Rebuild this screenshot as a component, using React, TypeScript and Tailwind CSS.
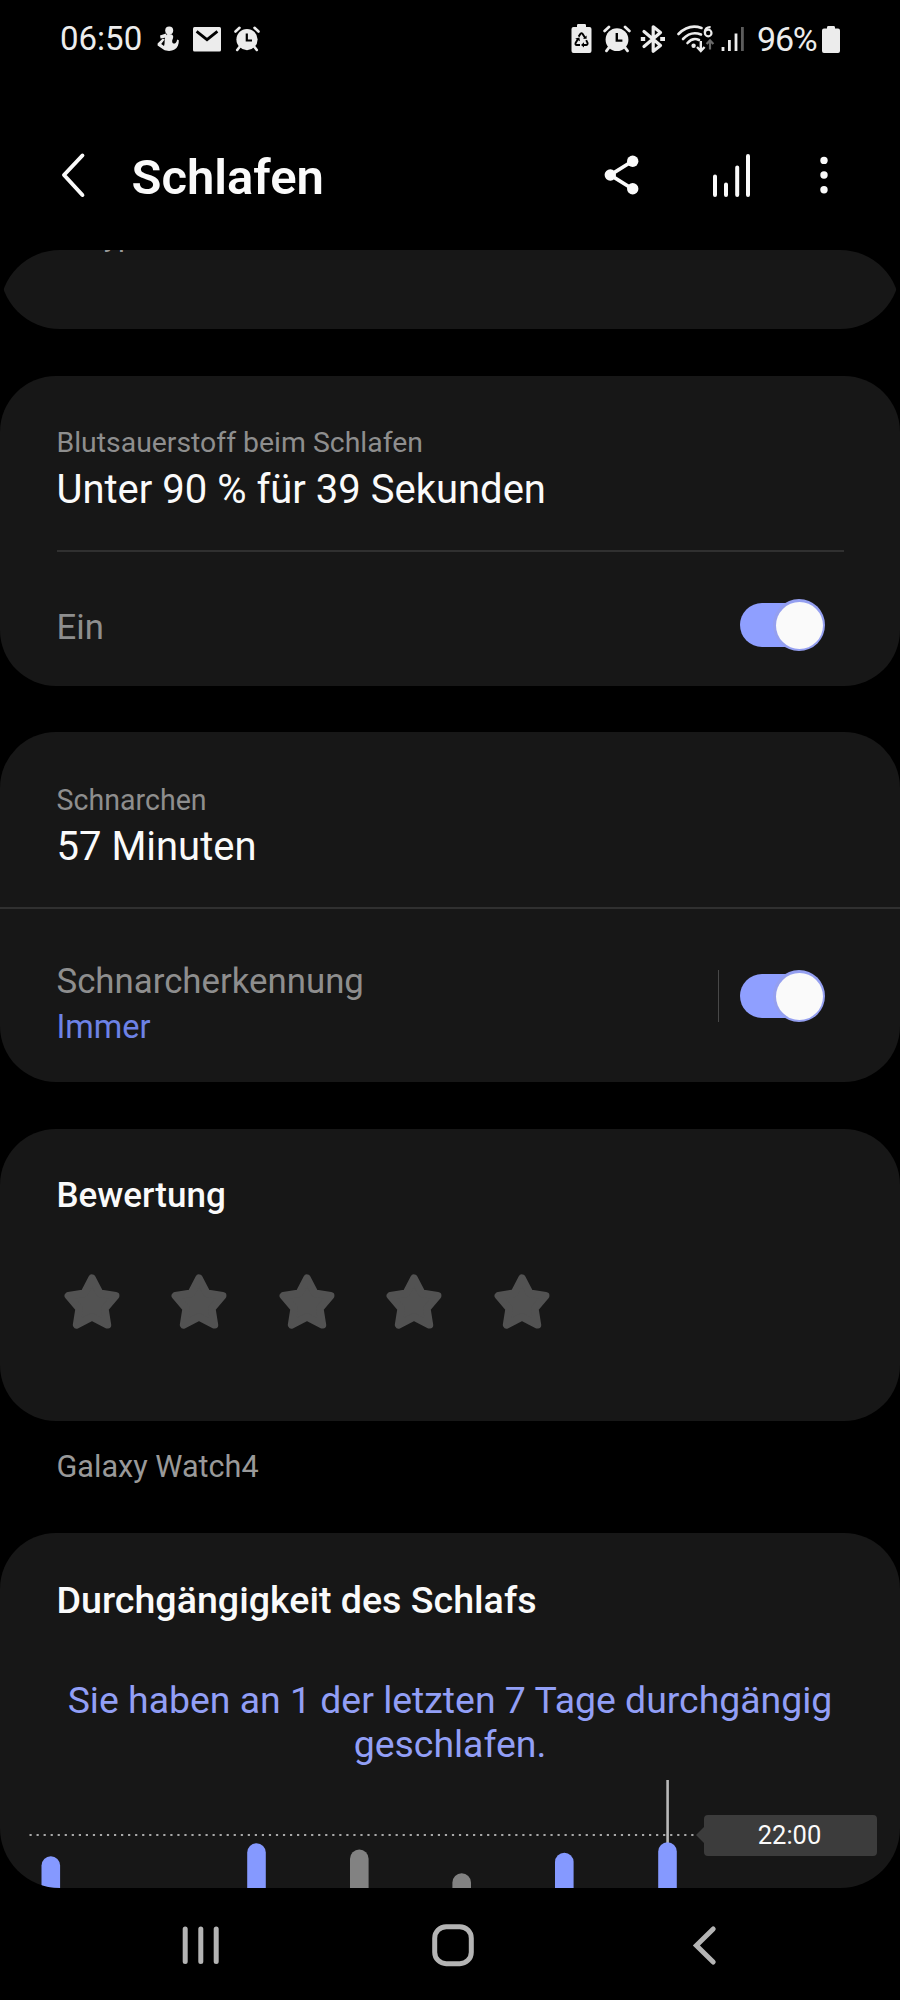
import type { ReactNode } from "react";

interface Bar {
  x: number;
  top: number;
  color: string;
}

const BARS: Bar[] = [
  { x: 41.5, top: 90.3, color: "#8599ff" },
  { x: 247.2, top: 77.3, color: "#8599ff" },
  { x: 350, top: 83.5, color: "#828282" },
  { x: 452.4, top: 107.3, color: "#828282" },
  { x: 555, top: 86.8, color: "#8599ff" },
  { x: 658.2, top: 76.3, color: "#8599ff" },
];

function AlarmIcon({ className }: { className: string }) {
  return (
    <svg viewBox="0 0 26 26" className={className} fill="none" stroke="#ececec" strokeLinecap="round">
      <circle cx="13" cy="13.6" r="10.6" fill="#ececec" stroke="none" />
      <path d="M1.5 5.5L5.5 1.8M24.5 5.5L20.5 1.8" strokeWidth="2.6" />
      <path d="M5.5 21L3.2 24M20.5 21L22.8 24" strokeWidth="2.6" />
      <path d="M12.8 7.5V14.5H18" stroke="#000" strokeWidth="2.2" strokeLinecap="butt" />
    </svg>
  );
}

function StatusBar() {
  return (
    <div className="flex h-[78px] items-center pl-[60px] pr-[60px] text-[33px] leading-[40px] text-[#ececec]">
      <span className="w-[97px]">06:50</span>
      <svg viewBox="0 0 22 26" className="h-[26px] w-[22px]" fill="#ececec">
        <circle cx="12.2" cy="4.4" r="4" />
        <path d="M9 7.6L3 9.6L3.6 12.4L9.2 11.4Z" />
        <path d="M9.5 8.5C12 7.6 15.8 8 16.2 10.5C16.4 12.8 14.8 14 15.2 16C15.7 17.6 17.4 18 18.6 17C19.6 16.1 19.8 14.5 20.2 13.4L21.8 14.2C22 18 20.6 21.8 17.5 23.6C14.5 25.4 9.5 25.4 6.5 23.5L.6 19.4V17.6L5.8 12.4L7.6 13.6L4.2 18L7 20C8.4 17 6.6 12 9.5 8.5Z" />
      </svg>
      <svg viewBox="0 0 28 25" className="ml-[14px] h-[25px] w-[28px]">
        <rect width="28" height="24.5" rx="1.5" fill="#ececec" />
        <path d="M3.6 4.4L14 12.6L24.4 4.4" fill="none" stroke="#000" strokeWidth="2.8" />
      </svg>
      <AlarmIcon className="ml-[13px] h-[26px] w-[26px]" />

      <div className="ml-auto flex items-center">
        <svg viewBox="0 0 22 30" className="h-[30px] w-[22px]">
          <path d="M6 3V1.2Q6 0 7.2 0H13.8Q15 0 15 1.2V3H18.5Q20.5 3 20.5 5V27Q20.5 29 18.5 29H2.5Q.5 29 .5 27V5Q.5 3 2.5 3Z" fill="#ececec" />
          <g fill="none" stroke="#000" strokeWidth="1.9">
            <path d="M7.6 12.6L9.4 9.9Q10.5 8.8 11.6 9.9L14.2 14" />
            <path d="M15.2 16.2L16.6 19Q16.9 20.8 15 21H11.5" />
            <path d="M9 21H5.8Q4 20.8 4.6 19L7 15" />
          </g>
          <path d="M12 14.8H15.6V11.5ZM13 18.2V23.6L10 21ZM4.2 14.6L8.4 13.5L9 17.2Z" fill="#000" />
        </svg>
        <AlarmIcon className="ml-[10px] h-[28px] w-[28px]" />
        <svg viewBox="0 0 26 30" className="ml-[9px] h-[30px] w-[26px]" fill="none" stroke="#ececec" strokeWidth="3.2">
          <path d="M4 7.5L20.5 21.5L13.2 27.2V2.8L20.5 8.5L4 22.5" strokeLinejoin="round" strokeLinecap="round" />
          <path d="M.8 15H5.2M20.2 15H25" strokeWidth="4" />
        </svg>
        <svg viewBox="0 0 38 30" className="ml-[11px] h-[30px] w-[38px]" fill="none" stroke="#ececec" strokeWidth="2.6">
          <path d="M1.5 10Q12 -.5 24.5 4" strokeLinecap="round" />
          <path d="M6 15Q14 6.5 24 10.5" strokeLinecap="round" />
          <path d="M10.5 19Q15.8 13 22 16" strokeLinecap="round" />
          <circle cx="16.6" cy="21.8" r="2.2" fill="#ececec" stroke="none" />
          <path d="M23.8 17V25.5M20 23L23.8 27L27.6 23" strokeWidth="2.4" />
          <path d="M33 25.5V17M29.6 20L33 16.4L36.4 20" stroke="#6a6a6a" strokeWidth="2.2" />
          <path d="M33.6 3.2Q28.3 3 27.6 8.6" strokeWidth="2.2" />
          <circle cx="31.2" cy="9" r="3.3" strokeWidth="2.2" />
        </svg>
        <svg viewBox="0 0 24 26" className="ml-[6px] h-[26px] w-[24px]" strokeWidth="2.8" stroke="#ececec">
          <path d="M2 21V25M8.4 14V25M15 7.5V25" />
          <path d="M21.4 1V25" stroke="#5c5c5c" />
        </svg>
        <span className="ml-[12px] w-[65px] text-[34px] tracking-[-1.2px]">96%</span>
        <svg viewBox="0 0 18 27" className="h-[27px] w-[18px]" fill="#ececec">
          <path d="M5 2.6V1.4Q5 0 6.4 0H11.6Q13 0 13 1.4V2.6H16Q18 2.6 18 4.6V25Q18 27 16 27H2Q0 27 0 25V4.6Q0 2.6 2 2.6Z" />
        </svg>
      </div>
    </div>
  );
}

function Header() {
  return (
    <header className="flex h-[172px] items-start pl-[60px] pr-[72px] pt-[73px]">
      <svg viewBox="0 0 26 48" className="h-[48px] w-[26px]" fill="none" stroke="#fafafa" strokeWidth="4" strokeLinecap="round" strokeLinejoin="round">
        <path d="M22.4 4.5L4 24L22.4 44" />
      </svg>
      <h1 className="ml-[45.5px] mt-[-3px] text-[49px] font-semibold leading-[60px] text-[#fafafa]">Schlafen</h1>
      <svg viewBox="0 0 36 48" className="ml-auto h-[48px] w-[36px]" fill="#fafafa" stroke="#fafafa">
        <path d="M29.7 10L7.3 24L29.7 38" fill="none" strokeWidth="3.8" />
        <circle cx="7.3" cy="24" r="5.7" stroke="none" />
        <circle cx="29.7" cy="10.3" r="5.7" stroke="none" />
        <circle cx="29.7" cy="37.7" r="5.7" stroke="none" />
      </svg>
      <svg viewBox="0 0 40 48" className="ml-[71px] h-[48px] w-[40px]" stroke="#fafafa" strokeWidth="4" strokeLinecap="round">
        <path d="M5 25.5V44M16 33.5V44M27.2 16.5V44M38 5V44" />
      </svg>
      <svg viewBox="0 0 8 48" className="ml-[70px] h-[48px] w-[8px]" fill="#fafafa">
        <circle cx="4" cy="9.4" r="3.7" />
        <circle cx="4" cy="24" r="3.7" />
        <circle cx="4" cy="38.7" r="3.7" />
      </svg>
    </header>
  );
}

function Card({ className, children }: { className: string; children: ReactNode }) {
  return <section className={`bg-[#171717] rounded-[56px] ${className}`}>{children}</section>;
}

function Toggle() {
  return (
    <div className="flex h-[52px] w-[85px] shrink-0 items-center">
      <div className="h-[44px] w-[60px] rounded-l-full bg-[#8f9fff]" />
      <div className="-ml-[27px] flex h-[52px] w-[52px] shrink-0 items-center justify-center rounded-full bg-[#949ff0]">
        <div className="h-[47px] w-[47px] rounded-full bg-[#fafafa]" />
      </div>
    </div>
  );
}

function Star() {
  return (
    <svg viewBox="0 0 56 56" className="h-[56px] w-[56px]">
      <path
        d="M28 4.2L35.8 19.2L51.6 21.8L40.8 34.6L43.4 50.8L28 42.8L12.6 50.8L15.2 34.6L4.4 21.8L20.2 19.2Z"
        fill="#525252"
        stroke="#525252"
        strokeWidth="7.6"
        strokeLinejoin="round"
      />
    </svg>
  );
}

function SleepChart() {
  return (
    <div className="relative h-[122px]">
      <svg viewBox="0 0 900 122" className="block h-[122px] w-[900px]">
        <path d="M29.5 69H694" stroke="#a8a8a8" strokeWidth="2.2" strokeDasharray="2.2 4.84" />
        <path d="M667.6 14V80" stroke="#b8b8b8" strokeWidth="2.6" />
        {BARS.map((bar) => (
          <rect key={bar.x} x={bar.x} y={bar.top} width="18.6" height="90" rx="9.3" fill={bar.color} />
        ))}
        <path d="M696 69L705 60V78Z" fill="#3c3c3c" />
      </svg>
      <div className="absolute left-[704px] top-[49px] h-[41px] w-[173px] rounded-[4px] bg-[#3c3c3c] pr-[2px] text-center text-[25.5px] leading-[41px] text-[#fafafa]">
        22:00
      </div>
    </div>
  );
}

export default function App() {
  return (
    <div className="flex h-[2000px] w-[900px] flex-col overflow-hidden bg-black font-['Roboto',sans-serif]">
      <StatusBar />
      <Header />

      <main className="h-[1638px] shrink-0 overflow-hidden rounded-[60px]">
        {/* card scrolled most of the way out of view */}
        <section className="-mt-[71px] h-[150px] rounded-b-[60px] bg-[#171717] pl-[87px] pt-[39px] text-[30px] leading-[36px] text-[#999999]">
          Typ
        </section>

        <Card className="mt-[47px] h-[310px] pl-[56.5px] pr-[56px] pt-[47px]">
          <p className="text-[28.4px] leading-[40px] text-[#8e8e8e]">Blutsauerstoff beim Schlafen</p>
          <h2 className="mt-0.5 text-[40px] leading-[50px] text-[#fafafa]">Unter 90 % für 39 Sekunden</h2>
          <div className="mt-[35px] h-[2px] bg-[#303030]" />
          <div className="flex justify-between pr-[19px] pt-[47px]">
            <span className="mt-[5px] text-[34.7px] leading-[46px] text-[#8e8e8e]">Ein</span>
            <Toggle />
          </div>
        </Card>

        <Card className="mt-[46px] h-[350px] pt-[48px]">
          <div className="px-[56.5px]">
            <p className="text-[28.6px] leading-[40px] text-[#8e8e8e]">Schnarchen</p>
            <h2 className="mt-0.5 text-[40px] leading-[50px] text-[#fafafa]">57 Minuten</h2>
          </div>
          <div className="mt-[35px] h-[2px] bg-[#303030]" />
          <div className="flex pl-[56.5px] pr-[75px]">
            <div className="mt-[49px]">
              <p className="text-[34.8px] leading-[46px] text-[#8e8e8e]">Schnarcherkennung</p>
              <p className="mt-[3px] text-[32.5px] leading-[40px] text-[#6d82e6]">Immer</p>
            </div>
            <div className="ml-auto mt-[61px] h-[52px] w-px bg-[#484848]" />
            <div className="ml-[21px] mt-[61px]">
              <Toggle />
            </div>
          </div>
        </Card>

        <Card className="mt-[47px] h-[292px] pl-[56.5px] pt-[44px]">
          <h2 className="text-[35px] font-medium leading-[46px] text-[#fafafa]">Bewertung</h2>
          <div className="ml-[7px] mt-[55px] flex gap-[51.5px]">
            {[1, 2, 3, 4, 5].map((n) => (
              <Star key={n} />
            ))}
          </div>
        </Card>

        <p className="mt-[26px] pl-[56.5px] text-[30.6px] leading-[40px] text-[#999999]">Galaxy Watch4</p>

        <Card className="mt-[46px] h-[420px] pt-[42px]">
          <h2 className="pl-[56.5px] text-[37.6px] font-medium leading-[50px] text-[#fafafa]">Durchgängigkeit des Schlafs</h2>
          <p className="mt-[53px] px-[57px] text-center text-[37.4px] leading-[44px] text-[#929ff6]">
            Sie haben an 1 der letzten 7 Tage durchgängig geschlafen.
          </p>
          <SleepChart />
        </Card>
      </main>

      <nav className="flex h-[112px] items-center px-[182px] pt-px">
        <svg viewBox="0 0 37 44" className="h-[44px] w-[37px]" stroke="#b4b4b4" strokeWidth="5" strokeLinecap="round">
          <path d="M3.2 6V38.5M18.8 6V38.5M34.2 6V38.5" />
        </svg>
        <svg viewBox="0 0 42 44" className="ml-[212.5px] h-[44px] w-[42px]" fill="none" stroke="#b4b4b4" strokeWidth="5">
          <rect x="2.7" y="3.7" width="36.6" height="37" rx="11.5" />
        </svg>
        <svg viewBox="0 0 26 44" className="ml-auto h-[44px] w-[26px]" fill="none" stroke="#b4b4b4" strokeWidth="5" strokeLinecap="round">
          <path d="M21.2 6L4.4 22.5L21.2 39" />
        </svg>
      </nav>
    </div>
  );
}
